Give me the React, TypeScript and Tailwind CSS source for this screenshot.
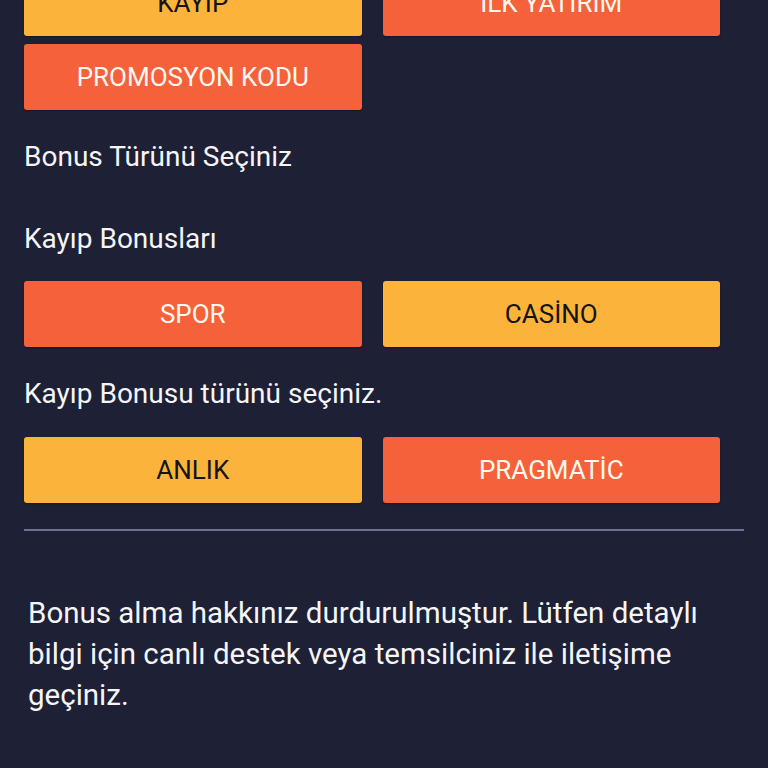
type BonusButton = {
  label: string;
  tone: "yellow" | "red";
};

const toneClass: Record<BonusButton["tone"], string> = {
  yellow: "bg-[#fbb33c] text-[#141414]",
  red: "bg-[#f4613a] text-[#fff8f0]",
};

function ButtonRow({ items, className = "" }: { items: BonusButton[]; className?: string }) {
  return (
    <div className={`grid w-[696px] grid-cols-2 gap-x-[21px] gap-y-2 ${className}`}>
      {items.map((item) => (
        <button
          key={item.label}
          type="button"
          className={`flex h-[66px] items-center justify-center rounded-[3px] text-[26px] leading-none shadow-[0_1px_2px_rgba(0,0,0,0.35)] ${toneClass[item.tone]}`}
        >
          {item.label}
        </button>
      ))}
    </div>
  );
}

export default function App() {
  return (
    <div
      className="h-[768px] w-[768px] overflow-hidden bg-[#1e2035] text-[#f5f5f7]"
      style={{ fontFamily: "Roboto, 'Noto Sans', sans-serif" }}
    >
      <div className="px-6">
        <ButtonRow
          className="-mt-[30px]"
          items={[
            { label: "KAYIP", tone: "yellow" },
            { label: "İLK YATIRIM", tone: "red" },
            { label: "PROMOSYON KODU", tone: "red" },
          ]}
        />

        <p className="mt-[31px] text-[28px] leading-[32px]">Bonus Türünü Seçiniz</p>
        <p className="mt-[50px] text-[28px] leading-[32px]">Kayıp Bonusları</p>

        <ButtonRow
          className="mt-[26px]"
          items={[
            { label: "SPOR", tone: "red" },
            { label: "CASİNO", tone: "yellow" },
          ]}
        />

        <p className="mt-[31px] text-[28px] leading-[32px]">Kayıp Bonusu türünü seçiniz.</p>

        <ButtonRow
          className="mt-[27px]"
          items={[
            { label: "ANLIK", tone: "yellow" },
            { label: "PRAGMATİC", tone: "red" },
          ]}
        />

        <div className="mt-[26px] h-[2px] w-full bg-[#6e7190]" />
      </div>

      <p className="mt-[62px] px-[28px] text-[29.5px] leading-[41px]">
        Bonus alma hakkınız durdurulmuştur. Lütfen detaylı bilgi için canlı destek veya
        temsilciniz ile iletişime geçiniz.
      </p>
    </div>
  );
}
